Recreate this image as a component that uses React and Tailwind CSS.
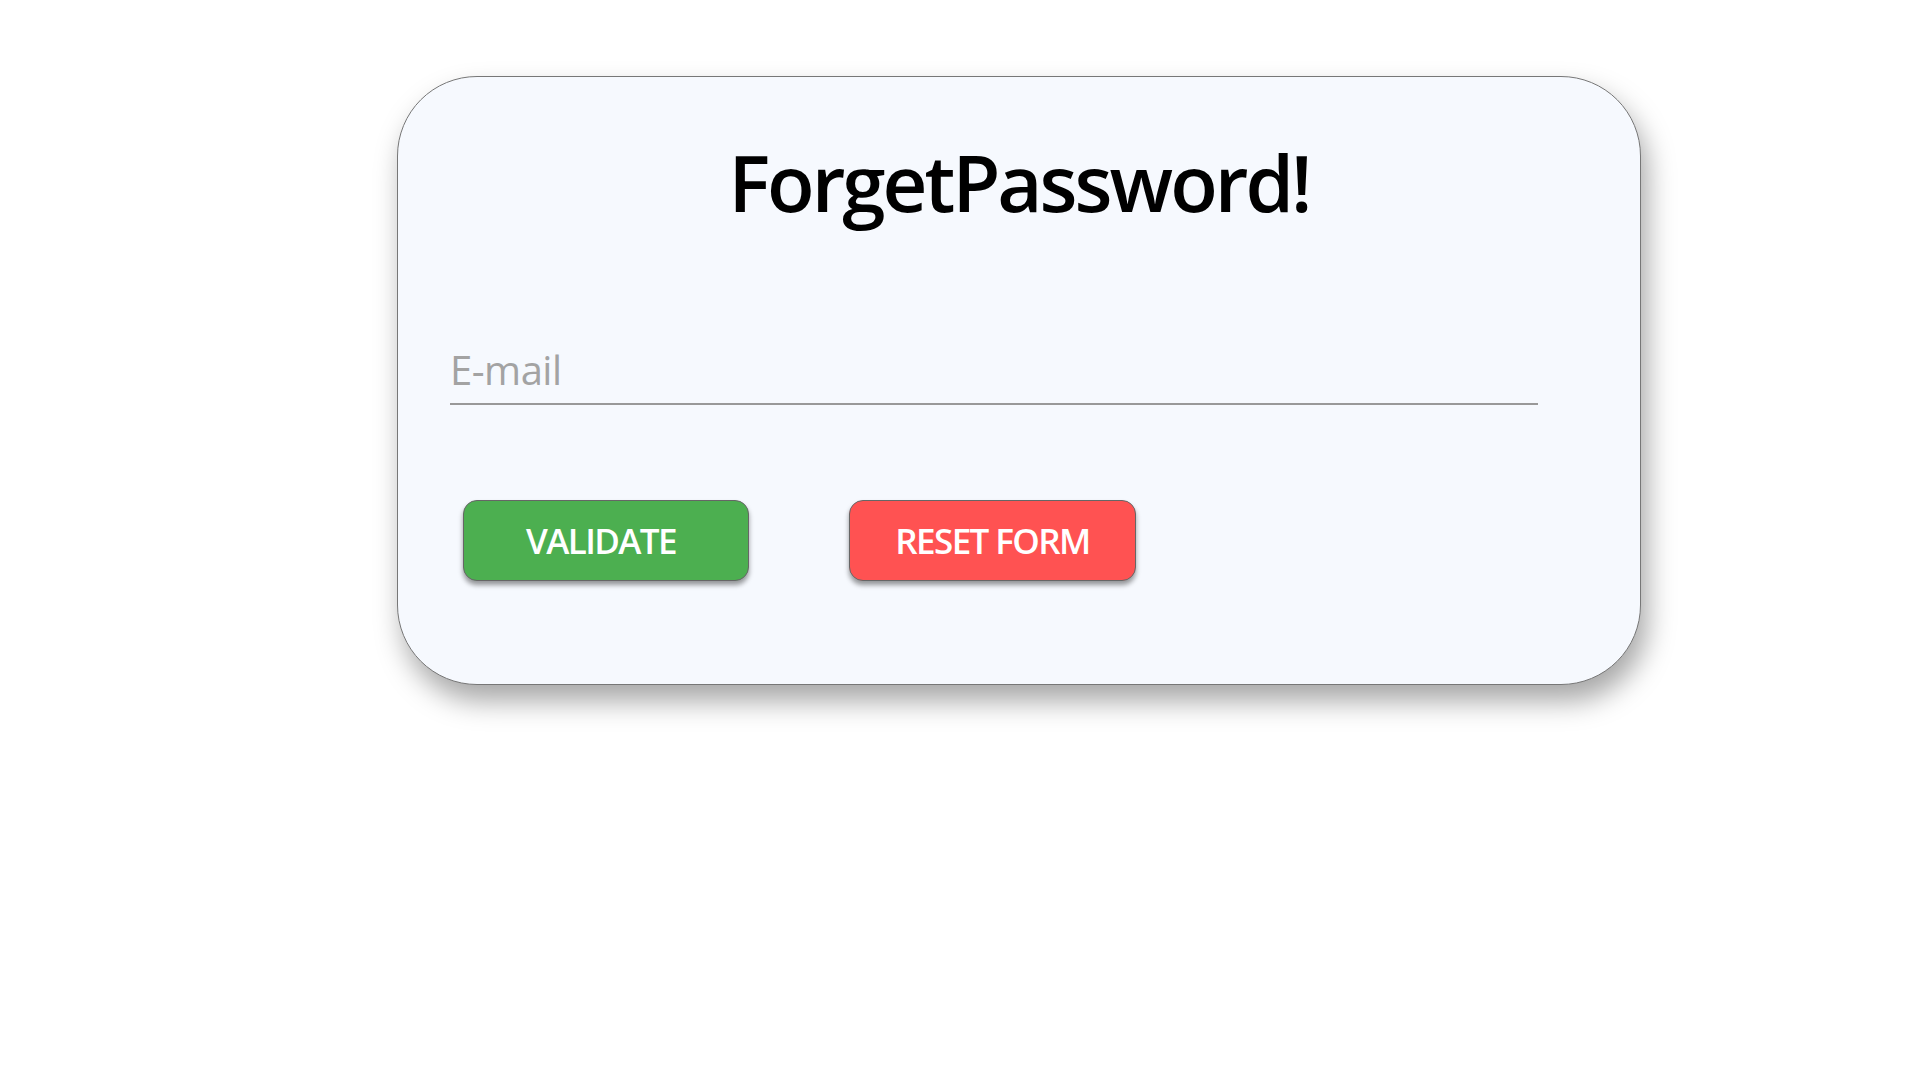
import React, { useState } from 'react';

export default function App() {
  const [email, setEmail] = useState('');

  return (
    <div className="min-h-screen bg-white pt-[76px]" style={{ fontFamily: '"Open Sans", "Noto Sans", sans-serif' }}>
      {/* Card */}
      <div className="ml-[397px] w-[1244px] h-[609px] rounded-[80px] border border-[#777] bg-[#f6f9fe] shadow-[6px_16px_28px_rgba(0,0,0,0.35)]">
        <h1 className="pt-[55px] text-center text-[78px] leading-[1.3] font-semibold tracking-[-3px] text-black">
          ForgetPassword!
        </h1>

        <div className="ml-[52px] mt-[102px] w-[1088px]">
          <input
            type="email"
            value={email}
            onChange={(e) => setEmail(e.target.value)}
            placeholder="E-mail"
            className="w-full h-[70px] bg-transparent border-b-2 border-[#999] text-[40px] text-[#333] placeholder:text-[#a3a3a3] outline-none tracking-[-0.5px]"
          />
        </div>

        <div className="flex gap-[100px] ml-[65px] mt-[95px]">
          <button className="w-[286px] h-[81px] pr-[10px] rounded-[14px] border border-[#666] bg-[#4caf50] text-white text-[35px] font-semibold tracking-[-1.6px] shadow-[0_4px_5px_rgba(0,0,0,0.4)]">
            VALIDATE
          </button>
          <button
            onClick={() => setEmail('')}
            className="w-[287px] h-[81px] rounded-[14px] border border-[#666] bg-[#ff5252] text-white text-[35px] font-semibold tracking-[-1.6px] shadow-[0_4px_5px_rgba(0,0,0,0.4)]"
          >
            RESET FORM
          </button>
        </div>
      </div>
    </div>
  );
}
